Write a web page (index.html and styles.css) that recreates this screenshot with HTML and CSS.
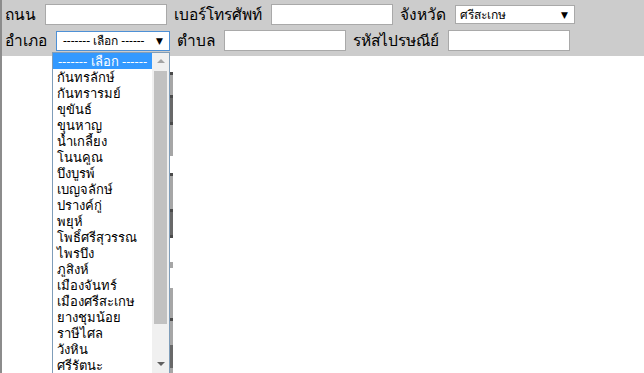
FILE: index.html
```html
<!DOCTYPE html>
<html lang="th">
  <head>
    <meta charset="UTF-8" />
    <meta name="viewport" content="width=device-width, initial-scale=1.0" />
    <title>ที่อยู่</title>
    <link rel="stylesheet" href="styles.css">
  </head>
  <body>
    <form class="address">
      <div class="row">
        <label class="lbl">ถนน</label>
        <input class="txt" type="text">
        <label class="lbl">เบอร์โทรศัพท์</label>
        <input class="txt" type="text">
        <label class="lbl">จังหวัด</label>
        <div class="sel sel-province">ศรีสะเกษ<span class="caret">▼</span></div>
      </div>
      <div class="row">
        <label class="lbl">อำเภอ</label>
        <div class="sel sel-district sel-open">------- เลือก ------<span class="caret">▼</span></div>
        <label class="lbl">ตำบล</label>
        <input class="txt" type="text">
        <label class="lbl">รหัสไปรษณีย์</label>
        <input class="txt" type="text">
      </div>
    </form>

    <div class="below">
      <!-- ส่วนของหน้าเดิมที่โผล่ออกมาข้างรายการ -->
      <div class="peek">
        <div class="pk w h15"></div>
        <div class="pk ln"></div>
        <div class="pk g1 h20"></div>
        <div class="pk ln"></div>
        <div class="pk g2 h24"></div>
        <div class="pk ln"></div>
        <div class="pk g1 h31"></div>
        <div class="pk w h17"></div>
        <div class="pk ln"></div>
        <div class="pk g1 h33"></div>
        <div class="pk ln"></div>
        <div class="pk g2 h23"></div>
        <div class="pk ln"></div>
        <div class="pk w h24"></div>
        <div class="pk g1 h6"></div>
        <div class="pk w h20"></div>
        <div class="pk g1 h30"></div>
        <div class="pk ln"></div>
        <div class="pk g1 h24"></div>
        <div class="pk g2 h23"></div>
        <div class="pk g1 h6"></div>
      </div>
    </div>

    <div class="droplist">
      <ul class="opts">
        <li class="active">------- เลือก ------</li>
        <li>กันทรลักษ์</li>
        <li>กันทรารมย์</li>
        <li>ขุขันธ์</li>
        <li>ขุนหาญ</li>
        <li>น้ำเกลี้ยง</li>
        <li>โนนคูณ</li>
        <li>บึงบูรพ์</li>
        <li>เบญจลักษ์</li>
        <li>ปรางค์กู่</li>
        <li>พยุห์</li>
        <li>โพธิ์ศรีสุวรรณ</li>
        <li>ไพรบึง</li>
        <li>ภูสิงห์</li>
        <li>เมืองจันทร์</li>
        <li>เมืองศรีสะเกษ</li>
        <li>ยางชุมน้อย</li>
        <li>ราษีไศล</li>
        <li>วังหิน</li>
        <li>ศรีรัตนะ</li>
      </ul>
      <div class="sbar">
        <span class="arr up"></span>
        <span class="thumb"></span>
        <span class="arr down"></span>
      </div>
    </div>
  </body>
</html>
```

FILE: styles.css
```css
html,
body {
  height: 100%;
  margin: 0;
}
body {
  position: relative;
  overflow: hidden;
  background: #fff;
  border-left: 2px solid #8c8c8c;
  font-family: "Noto Sans", "DejaVu Sans", sans-serif;
  color: #000;
}
.address {
  background: #cccccc;
  height: 56px;
  padding: 4px 0 0 3px;
  box-sizing: border-box;
}
.row {
  display: flex;
  align-items: center;
  height: 21px;
  margin-bottom: 5px;
}
.lbl {
  font-size: 15.5px;
  margin-right: 9px;
  white-space: nowrap;
}
.txt {
  width: 122px;
  height: 21px;
  box-sizing: border-box;
  margin: 0 7px 0 0;
  border: 1px solid #a9a9a9;
  background: #fff;
  padding: 0;
}
.sel {
  position: relative;
  box-sizing: border-box;
  background: #fff;
  border: 1px solid #a9a9a9;
  font-size: 12px;
  padding-left: 4px;
  margin-right: 7px;
  line-height: 17px;
}
.sel-province {
  width: 120px;
  height: 19px;
}
.sel-district {
  width: 114px;
  height: 20px;
  padding-left: 6px;
}
.sel-open {
  border-color: #4d90d6;
}
.caret {
  position: absolute;
  right: 6px;
  top: 0;
  font-size: 9px;
}
.below {
  padding-left: 165px;
}
.peek {
  width: 6px;
  margin-top: 1px;
}
.pk.w {
  background: #fff;
}
.pk.g1 {
  background: #a6a6a6;
}
.pk.g2 {
  background: #686868;
}
.pk.ln {
  height: 3px;
  background: #4a4a4a;
}
.h6 { height: 6px; }
.h15 { height: 15px; }
.h17 { height: 17px; }
.h20 { height: 20px; }
.h23 { height: 23px; }
.h24 { height: 24px; }
.h30 { height: 30px; }
.h31 { height: 31px; }
.h33 { height: 33px; }
.droplist {
  position: absolute;
  left: 50px;
  top: 52px;
  width: 116px;
  height: 321px;
  border: 1px solid #7f9db9;
  border-bottom: none;
  background: #fff;
  display: flex;
}
.opts {
  list-style: none;
  margin: 0;
  padding: 0;
  flex: 1;
  font-size: 13px;
}
.opts li {
  height: 16px;
  line-height: 16px;
  padding-left: 4px;
  white-space: nowrap;
  overflow: hidden;
}
.opts li.active {
  background: #3399ff;
  color: #fff;
  text-align: center;
  padding-left: 0;
}
.sbar {
  width: 17px;
  background: #f0f0f0;
  display: flex;
  flex-direction: column;
  align-items: center;
}
.arr {
  width: 0;
  height: 0;
  border-left: 4px solid transparent;
  border-right: 4px solid transparent;
  margin: 6px 0;
}
.arr.up {
  border-bottom: 4px solid #a3a3a3;
}
.arr.down {
  border-top: 4px solid #606060;
  margin-top: auto;
  margin-bottom: 8px;
}
.thumb {
  width: 13px;
  height: 253px;
  background: #c1c1c1;
  margin-top: 2px;
}
```
